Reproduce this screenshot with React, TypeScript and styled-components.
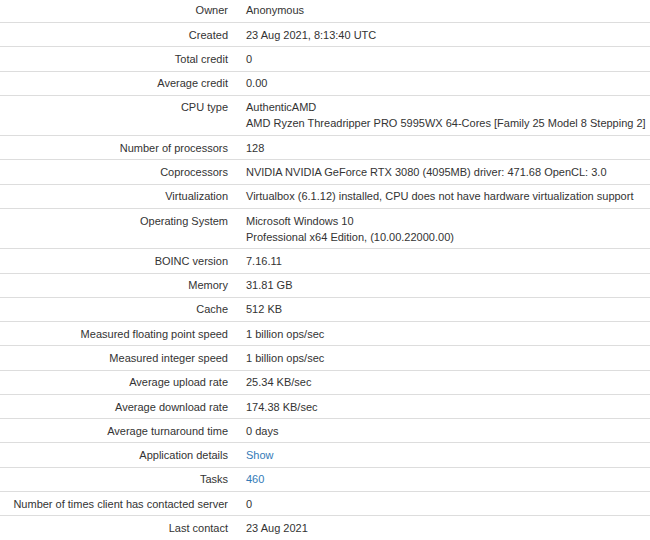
import React from "react";
import styled, { createGlobalStyle } from "styled-components";

const Global = createGlobalStyle`
  html, body { margin: 0; padding: 0; background: #fff; }
  body { font-family: "Liberation Sans", Arial, sans-serif; color: #333; }
`;

const Page = styled.div`
  width: 650px;
  margin-top: -2.3px;
`;

const Table = styled.table`
  width: 100%;
  border-collapse: collapse;
  border-spacing: 0;
  font-size: 11px;
  line-height: 16px;
`;

const Row = styled.tr``;

const Label = styled.td`
  width: 237px;
  box-sizing: border-box;
  text-align: right;
  vertical-align: top;
  padding: 3.65px 9px 3.65px 8px;
  border-top: 1px solid #ddd;
  white-space: nowrap;
`;

const Value = styled.td`
  text-align: left;
  vertical-align: top;
  padding: 3.65px 2px 3.65px 9px;
  border-top: 1px solid #ddd;
`;

const Link = styled.a`
  color: #337ab7;
  text-decoration: none;
`;

type Item = { label: string; value: React.ReactNode };

const items: Item[] = [
  { label: "Owner", value: "Anonymous" },
  { label: "Created", value: "23 Aug 2021, 8:13:40 UTC" },
  { label: "Total credit", value: "0" },
  { label: "Average credit", value: "0.00" },
  {
    label: "CPU type",
    value: (
      <>
        AuthenticAMD
        <br />
        AMD Ryzen Threadripper PRO 5995WX 64-Cores [Family 25 Model 8 Stepping 2]
      </>
    ),
  },
  { label: "Number of processors", value: "128" },
  {
    label: "Coprocessors",
    value: "NVIDIA NVIDIA GeForce RTX 3080 (4095MB) driver: 471.68 OpenCL: 3.0",
  },
  {
    label: "Virtualization",
    value: "Virtualbox (6.1.12) installed, CPU does not have hardware virtualization support",
  },
  {
    label: "Operating System",
    value: (
      <>
        Microsoft Windows 10
        <br />
        Professional x64 Edition, (10.00.22000.00)
      </>
    ),
  },
  { label: "BOINC version", value: "7.16.11" },
  { label: "Memory", value: "31.81 GB" },
  { label: "Cache", value: "512 KB" },
  { label: "Measured floating point speed", value: "1 billion ops/sec" },
  { label: "Measured integer speed", value: "1 billion ops/sec" },
  { label: "Average upload rate", value: "25.34 KB/sec" },
  { label: "Average download rate", value: "174.38 KB/sec" },
  { label: "Average turnaround time", value: "0 days" },
  { label: "Application details", value: <Link href="#">Show</Link> },
  { label: "Tasks", value: <Link href="#">460</Link> },
  { label: "Number of times client has contacted server", value: "0" },
  { label: "Last contact", value: "23 Aug 2021" },
];

export default function App() {
  return (
    <>
      <Global />
      <Page>
        <Table>
          <tbody>
            {items.map((it) => (
              <Row key={it.label}>
                <Label>{it.label}</Label>
                <Value>{it.value}</Value>
              </Row>
            ))}
          </tbody>
        </Table>
      </Page>
    </>
  );
}
